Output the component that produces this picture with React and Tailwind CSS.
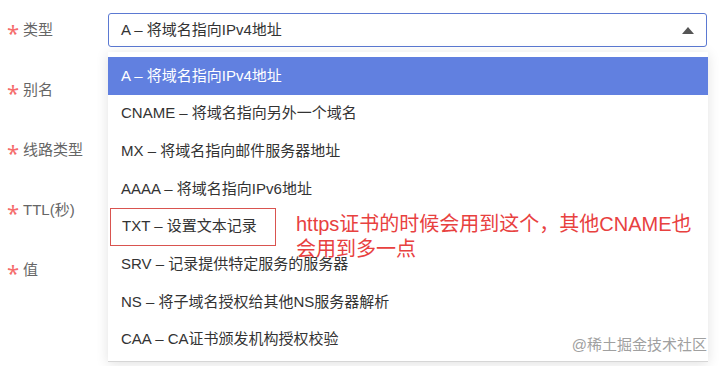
const records = [
    'A – 将域名指向IPv4地址',
    'CNAME – 将域名指向另外一个域名',
    'MX – 将域名指向邮件服务器地址',
    'AAAA – 将域名指向IPv6地址',
    'TXT – 设置文本记录',
    'SRV – 记录提供特定服务的服务器',
    'NS – 将子域名授权给其他NS服务器解析',
    'CAA – CA证书颁发机构授权校验',
]

const labels = ['类型', '别名', '线路类型', 'TTL(秒)', '值']

function App() {
    return (
        <div
            className="relative w-[721px] h-[366px] overflow-hidden bg-white"
            style={{ fontFamily: '"Liberation Sans", "Noto Sans CJK SC", sans-serif' }}
        >
            {/* form rows */}
            <div className="flex flex-col gap-[26px] pt-[13px] pr-[14px]">
                {labels.map((label, i) => (
                    <div key={label} className="flex items-center h-[34px]">
                        <div className="w-[108px] flex items-center pl-[7px] text-[15px] text-[#666]">
                            <span
                                className="w-[16px] text-[22px] leading-none text-[#f56c6c] translate-y-[2px]"
                                style={{ fontFamily: '"Noto Sans", sans-serif' }}
                            >
                                *
                            </span>
                            {label}
                        </div>
                        {i === 0 ? (
                            <div className="flex-1 h-[34px] flex items-center justify-between border border-[#5b79d2] rounded-[3px] pl-[12px] pr-[12px] text-[15px] text-[#333]">
                                A – 将域名指向IPv4地址
                                <span className="w-0 h-0 border-l-[6px] border-r-[6px] border-b-[7px] border-l-transparent border-r-transparent border-b-[#555]"></span>
                            </div>
                        ) : (
                            <div className="flex-1 h-[34px] border border-[#dcdfe6] rounded-[3px]"></div>
                        )}
                    </div>
                ))}
            </div>

            {/* dropdown menu */}
            <div className="absolute left-[108px] top-[52px] w-[600px] h-[310px] bg-white border-b border-[#d6d6d6] shadow-[0_2px_12px_rgba(0,0,0,0.12)] pt-[5px]">
                {records.map((r, i) => (
                    <div
                        key={r}
                        className={
                            i === 0
                                ? 'h-[37.7px] flex items-center pl-[13px] text-[15px] bg-[#6180e0] text-white'
                                : i === 4
                                ? 'h-[37.7px] flex items-center text-[15px] text-[#333]'
                                : 'h-[37.7px] flex items-center pl-[13px] text-[15px] text-[#333]'
                        }
                    >
                        {i === 4 ? (
                            <span className="ml-[2px] h-[38px] w-[166px] flex items-center pl-[11px] border border-[#d9534f]">
                                {r}
                            </span>
                        ) : (
                            r
                        )}
                    </div>
                ))}
            </div>

            {/* annotation */}
            <p className="absolute left-[296px] top-[212px] w-[410px] text-[20px] leading-[25px] text-[#e8413f]">
                https证书的时候会用到这个，其他CNAME也会用到多一点
            </p>

            {/* watermark */}
            <div className="absolute right-[14px] top-[334px] text-[15px] text-[#a0a0a0]">
                @稀土掘金技术社区
            </div>
        </div>
    )
}

export default App
